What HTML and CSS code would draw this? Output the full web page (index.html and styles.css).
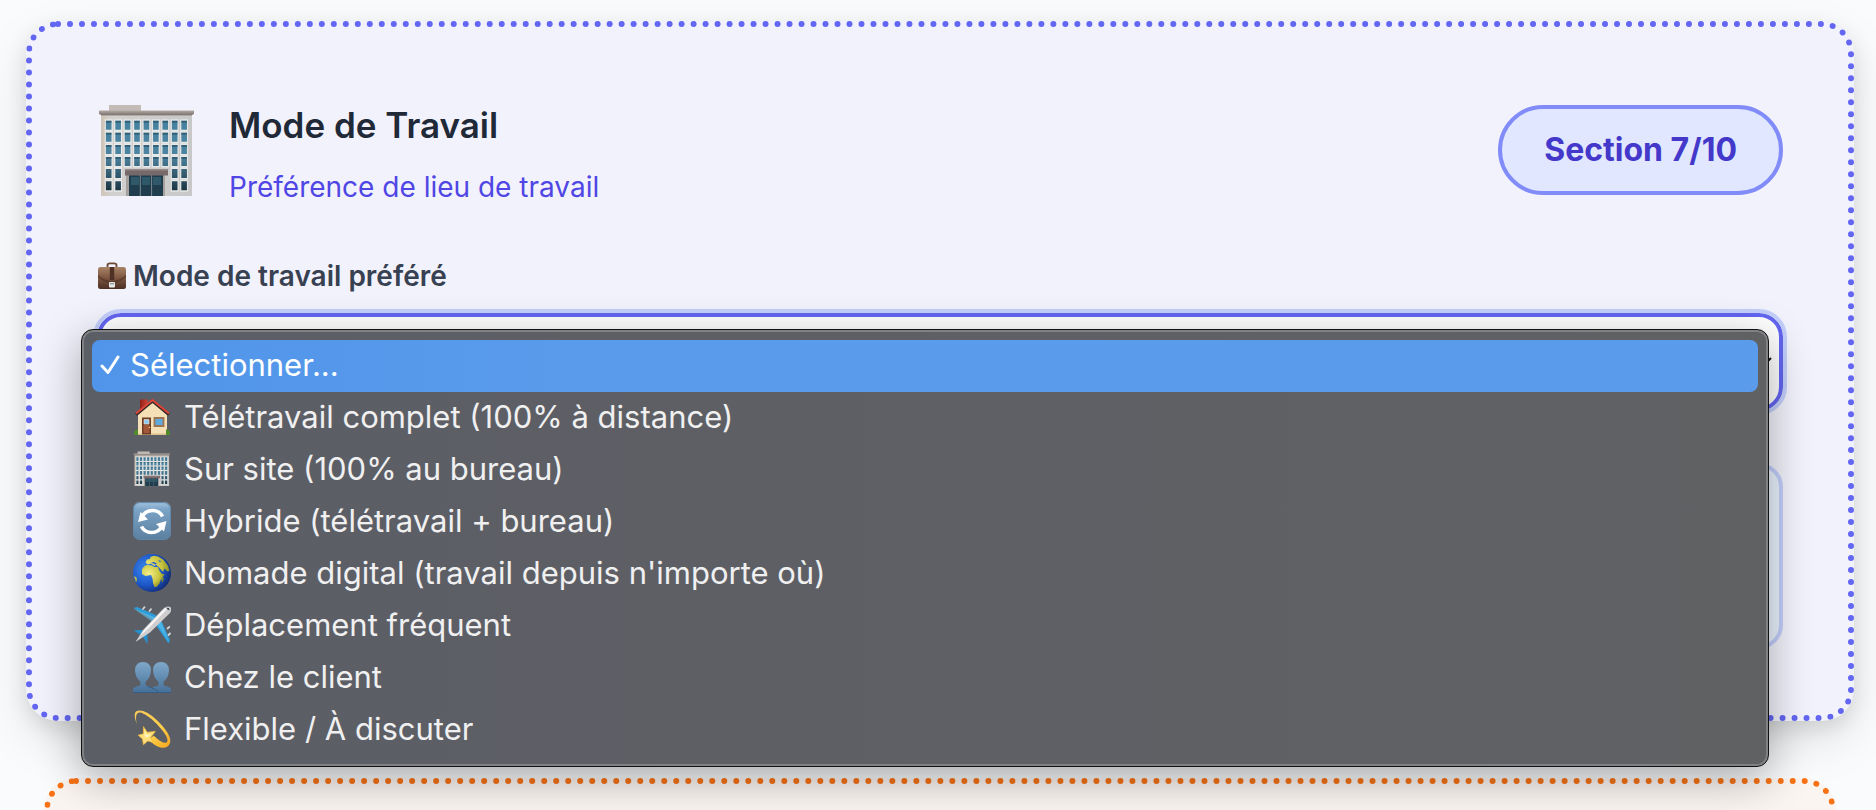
FILE: index.html
```html
<!DOCTYPE html>
<html lang="fr">
<head>
<meta charset="utf-8">
<meta name="viewport" content="width=device-width, initial-scale=1">
<title>Mode de Travail</title>
<link rel="stylesheet" href="styles.css">
</head>
<body>
<svg class="sprite" aria-hidden="true">
  <defs>
    <linearGradient id="wall" x1="0" y1="0" x2="1" y2="0"><stop offset="0" stop-color="#cfc5b8"/><stop offset=".12" stop-color="#d3d1cf"/><stop offset="1" stop-color="#c8c8c8"/></linearGradient>
    <linearGradient id="roof" x1="0" y1="0" x2="0" y2="1"><stop offset="0" stop-color="#b3aaa4"/><stop offset="1" stop-color="#7d7471"/></linearGradient>
    <linearGradient id="glass" x1="0" y1="15" x2="0" y2="86" gradientUnits="userSpaceOnUse"><stop offset="0" stop-color="#4682a0"/><stop offset=".5" stop-color="#4c84a0"/><stop offset=".75" stop-color="#355d72"/><stop offset="1" stop-color="#1b3540"/></linearGradient>
    <linearGradient id="sync" x1="0" y1="0" x2="0" y2="1"><stop offset="0" stop-color="#a3c3df"/><stop offset=".2" stop-color="#7ba3c6"/><stop offset="1" stop-color="#5b7f9f"/></linearGradient>
    <radialGradient id="sea" cx=".35" cy=".4" r=".7"><stop offset="0" stop-color="#3d8df0"/><stop offset=".6" stop-color="#1d56c8"/><stop offset="1" stop-color="#10286c"/></radialGradient>
    <radialGradient id="land" cx=".3" cy=".4" r=".8"><stop offset="0" stop-color="#f6f08a"/><stop offset=".6" stop-color="#c9c53f"/><stop offset="1" stop-color="#6f7a1e"/></radialGradient>
    <linearGradient id="people" x1="0" y1="0" x2="0" y2="1"><stop offset="0" stop-color="#7fa8ca"/><stop offset="1" stop-color="#456f98"/></linearGradient>
    <linearGradient id="gold" x1="0" y1="0" x2="1" y2="1"><stop offset="0" stop-color="#f6c95a"/><stop offset=".6" stop-color="#ffcf4a"/><stop offset="1" stop-color="#f3a51c"/></linearGradient>
    <linearGradient id="leather" x1="0" y1="0" x2="0" y2="1"><stop offset="0" stop-color="#a98467"/><stop offset=".5" stop-color="#7d5540"/><stop offset="1" stop-color="#4c2f24"/></linearGradient>
    <linearGradient id="brick" x1="0" y1="0" x2="1" y2="0"><stop offset="0" stop-color="#8d2018"/><stop offset="1" stop-color="#cf4034"/></linearGradient>
  </defs>
  <symbol id="i-building" viewBox="0 0 100 92">
    <path fill="#c3bcb6" d="M12 0h32v7H12z"/>
    <path fill="url(#wall)" d="M4 8h91v83H4z"/>
    <path fill="#8f8782" opacity=".5" d="M4 9h91v2H4z"/>
    <path fill="url(#roof)" d="M2 5.5h95v3.5l-2 1H4l-2-1z"/>
    <path fill="none" stroke="#f3f6f6" stroke-width="12" stroke-dasharray="8 1.43" d="M7.7 20.2H92M7.7 32.3H92M7.7 44.4H92M7.7 56.5H92M7.7 68.6H25M7.7 80.7H25M73.7 68.6H92M73.7 80.7H92" opacity=".65"/>
    <path fill="none" stroke="url(#glass)" stroke-width="9" stroke-dasharray="5.6 3.83" d="M8.9 20.2H92M8.9 32.3H92M8.9 44.4H92M8.9 56.5H92M8.9 68.6H24M8.9 80.7H24M74.9 68.6H92M74.9 80.7H92"/>
    <path fill="none" stroke="#23495c" stroke-width="2" stroke-dasharray="5.6 3.83" d="M8.9 16.7H92M8.9 28.8H92M8.9 40.9H92M8.9 53H92" opacity=".6"/>
    <path fill="#a7a19d" d="M29 70h39v21H29z"/>
    <path fill="#1f3d4c" d="M32 70h34v21H32z"/>
    <path fill="#3b6a80" d="M34 72h8v8h-8zM45 72h8v8h-8zM56 72h8v8h-8z" opacity=".6"/>
    <path stroke="#7d8c92" stroke-width="1" d="M43.3 70v21M54.6 70v21"/>
    <path fill="#77696a" d="M28 64h43v6.5H28z"/>
    <path fill="#958a88" d="M28 64h43v1.5H28z"/>
  </symbol>
  <symbol id="i-briefcase" viewBox="0 0 30 28">
    <path fill="none" stroke="#6b4634" stroke-width="1.8" d="M10.5 5V3.2Q10.5 1.4 13 1.4h4q2.5 0 2.5 1.800V5"/>
    <rect x="1" y="5" width="28" height="22" rx="2.5" fill="url(#leather)"/>
    <path fill="#4d2f25" opacity=".65" d="M1 13q7 6 14 6t14-6v2q-7 6-14 6T1 15z"/>
    <path fill="#4f3024" d="M12.8 5h4.4v13h-4.4z"/>
    <rect x="12" y="20" width="6" height="5.5" rx="1" fill="#e8e9ea"/>
    <path fill="#9b9b9b" d="M13 21h4v1.5h-4z"/>
  </symbol>
  <symbol id="i-house" viewBox="0 0 38 38">
    <path fill="url(#brick)" d="M7 1.5h7.5V10L7 16z"/>
    <path fill="#f4dfb6" d="M5 17 19.5 4 34 17v20H5z"/>
    <path fill="#dcc08e" d="M5 35.5h29V37H5z"/>
    <path fill="none" stroke="#3a2a26" stroke-width="3" stroke-linejoin="round" d="M3 16.500 19.500 3 36 16.500"/>
    <path fill="none" stroke="#e0453a" stroke-width="2" stroke-linejoin="round" d="M3 15.500 19.500 2 36 15.500"/>
    <path fill="#6d3a24" d="M9 19.500h9V36.500H9z"/>
    <path fill="#a3583a" d="M10.5 27h6v8h-6z"/>
    <path fill="#8ccbf2" stroke="#e9ddcf" stroke-width=".7" d="M11 21.500h5v4.500h-5z"/>
    <path fill="#5ea9dd" stroke="#9c7454" stroke-width="1.8" d="M21.5 20h9v8h-9z"/>
    <circle cx="16.5" cy="29.5" r=".8" fill="#f4d04a"/>
    <path fill="#4f8b2a" d="M1 37v-3q1-3 4-2.500V37zM37 37v-3q-1-3-4-2.500V37z"/>
  </symbol>
  <symbol id="i-sync" viewBox="0 0 38 38">
    <rect width="38" height="38" rx="7" fill="url(#sync)"/>
    <rect x=".6" y=".6" width="36.8" height="36.8" rx="6.5" fill="none" stroke="#5f86a9"/>
    <path fill="none" stroke="#fff" stroke-width="3.6" d="M8.5 15.500C11 10.500 15 8.500 19.500 8.500S27.500 10.500 29.500 14.500M29.500 23.500C27 28.500 23 30.500 18.500 30.500S10.500 28.500 8.500 24.500"/>
    <path fill="#fff" d="M5 20 7.500 10l7.500 7.500zM33.500 19 31 29.500 23 22z"/>
  </symbol>
  <symbol id="i-globe" viewBox="0 0 38 38">
    <circle cx="19" cy="19" r="19" fill="url(#sea)"/>
    <path fill="url(#land)" d="M9 15.500q2-4 5-4.500l5 .5 2 1.500h4l1.500 4 2.500 3h2.500l-2 4-2 2.500-1 3-3 3.500h-2l-1.500-4-.5-4.500-1.500-3.500-5.500 1-3.500-2z"/>
    <path fill="url(#land)" d="M12.500 8.500 14 5.500l3-.5.5-2L21 1.800l4 .7 5.500 3.300 4.500 6 1.500 5-2 .7-3-3-1.500 3.500-3.500-4-1.500-1.500-2-2-1.500 1.500L18 9.500l-3 1zM1 22l2.500 1.500.5 3-1 2zM29.500 23.500l1.500 1-1.500 4-1-1z"/>
    <path fill="#2a62c9" d="m18 8.500 3-.5 3 1.500-1.500 1zM25 6l3 1-1 1.500z"/>
  </symbol>
  <symbol id="i-plane" viewBox="0 0 38 38">
    <path fill="#2c9bd8" d="M.5 2 4 1l19 8 2 7zM37 34l-1.500 3.500L22 18l6-4z"/>
    <path fill="#64c5ee" d="m.5 2.500 18.500 13 3-4zM36 36l-12-18 4-3z" opacity=".6"/>
    <path fill="#2590cf" d="M.5 24.500 8 24l6 1.500-5 4zM14.500 38 10 31l4.500-5.500z"/>
    <path fill="#cfcdcd" d="M2.500 36 10 24 28.500 4.500Q33-.5 36.500.7T37 7L17 26.500z"/>
    <path fill="#f6f4f4" d="M7 30 11 24 29.500 4.500Q33 .5 35.500 1.500L16 22z"/>
    <path fill="#3b4a55" d="m33 1.500 3 .5.5 2.500-2-1z"/>
    <path stroke="#d2d2d4" stroke-width="1.8" stroke-linecap="round" d="m10 3 1.500-1.800M16.500 5 18 3.200M34.500 22.500l1.800-1.500M35.500 29l1.500-1.500"/>
  </symbol>
  <symbol id="i-people" viewBox="0 0 38 38">
    <path fill="url(#people)" d="M0 35v-4q1-2 6-3 2-1 1.500-4Q2 19 2 12 2.500 4 10 4t8 8q0 7-5.500 12-.5 3 1.500 4 5 1 6 3v4z"/>
    <path fill="url(#people)" d="M18 35v-4q1-2 6-3 2-1 1.500-4Q20 19 20 12q.5-8 8-8t8 8q0 7-5.500 12-.5 3 1.500 4 5 1 6 3v4z"/>
    <path fill="none" stroke="#355d84" d="M14.500 28.500q4 1 6 2.500l2 .5q2 1 2.500 2.500M0 34.500h38"/>
  </symbol>
  <symbol id="i-dizzy" viewBox="0 0 38 40">
    <path fill="url(#gold)" d="M3 15Q-2 2 4 .7 12-.5 24 10.500 40 26 38 34.500 36 41 28 39.500 22 38 15 31l6-4q8 8 13 7.500 4-3-4-13Q18 7 8 3 0 1 3 15z"/>
    <path fill="#ffe07a" stroke="#f6b93a" stroke-width=".8" stroke-linejoin="round" d="m10 17.500 4 6 8.500-1-5 6.500 2.500 5-5.500-1.500-4.500 4L9 30.500l-4.500-4 5.500-1.500z"/>
    <path fill="#fff6c4" d="m11 21 2 5 5-.5-4 3.500-2.500-1z"/>
  </symbol>
</svg>

<main class="page">
  <section class="card card-work">
    <header class="card-head">
      <svg class="hero-icon" aria-hidden="true"><use href="#i-building"/></svg>
      <div class="heading">
        <h2 class="title">Mode de Travail</h2>
        <p class="subtitle">Préférence de lieu de travail</p>
      </div>
      <span class="badge">Section 7/10</span>
    </header>

    <label class="field-label" for="mode">
      <svg class="label-icon" aria-hidden="true"><use href="#i-briefcase"/></svg>
      Mode de travail préféré
    </label>
    <div class="field">
      <select class="select" id="mode">
        <option>Sélectionner...</option>
      </select>
      <svg class="chevron" viewBox="0 0 16 10" aria-hidden="true"><path d="m1 1 7 7 7-7"/></svg>
      <ul class="menu" role="listbox" aria-label="Mode de travail préféré">
        <li class="item item-active" role="option" aria-selected="true"><svg class="check" viewBox="0 0 20 20" aria-hidden="true"><path d="m2 11 6 6.500L18 2"/></svg>Sélectionner...</li>
        <li class="item" role="option"><svg class="icon" aria-hidden="true"><use href="#i-house"/></svg>Télétravail complet (100% à distance)</li>
        <li class="item" role="option"><svg class="icon" aria-hidden="true"><use href="#i-building"/></svg>Sur site (100% au bureau)</li>
        <li class="item" role="option"><svg class="icon" aria-hidden="true"><use href="#i-sync"/></svg>Hybride (télétravail + bureau)</li>
        <li class="item" role="option"><svg class="icon" aria-hidden="true"><use href="#i-globe"/></svg>Nomade digital (travail depuis n'importe où)</li>
        <li class="item" role="option"><svg class="icon" aria-hidden="true"><use href="#i-plane"/></svg>Déplacement fréquent</li>
        <li class="item" role="option"><svg class="icon" aria-hidden="true"><use href="#i-people"/></svg>Chez le client</li>
        <li class="item" role="option"><svg class="icon" aria-hidden="true"><use href="#i-dizzy"/></svg>Flexible / À discuter</li>
      </ul>
    </div>
    <div class="note"></div>
  </section>
  <section class="card card-next"></section>
</main>
</body>
</html>
```

FILE: styles.css
```css
* { box-sizing: border-box; }

body {
  margin: 0;
  background: #f9fbfc;
  font-family: Inter, "Liberation Sans", sans-serif;
}

.sprite { position: absolute; width: 0; height: 0; }

.page {
  height: 100vh;
  overflow: hidden;
  padding: 21px 22px 0 26px;
}

.card {
  border: 6px dotted;
  border-radius: 32px;
}

.card-work {
  padding: 78px 65px 66px;
  border-color: #6366f1;
  background: #f2f2fc;
  box-shadow: 0 20px 50px rgba(0, 0, 0, .1), 0 8px 20px rgba(0, 0, 0, .1);
}

.card-next {
  min-height: 240px;
  margin: 57px 18px 0;
  border-color: #f97316;
  background: #fbf5f2;
}

.card-head {
  display: flex;
  align-items: flex-start;
  gap: 32px;
}

.hero-icon { width: 100px; height: 92px; flex: none; }

.heading { flex: 1; }

.title {
  margin: 0;
  color: #1f2937;
  font-size: 35px;
  line-height: 40px;
  font-weight: 600;
}

.subtitle {
  margin: 22px 0 0;
  color: #4f46e5;
  font-size: 28px;
  line-height: 40px;
}

.badge {
  padding: 21px 42px;
  border: 4px solid #818cf8;
  border-radius: 45px;
  background: #e0e7ff;
  color: #4338ca;
  font-size: 32px;
  line-height: 40px;
  font-weight: 700;
}

.field-label {
  display: flex;
  align-items: center;
  gap: 6px;
  margin-top: 49px;
  color: #374151;
  font-size: 28px;
  line-height: 40px;
  font-weight: 600;
}

.label-icon { width: 30px; height: 28px; }

.field {
  position: relative;
  margin-top: 17px;
}

.select {
  display: block;
  width: 100%;
  height: 98px;
  padding: 0 32px;
  border: 4px solid #6366f1;
  border-radius: 24px;
  outline: 4px solid #c3cffb;
  appearance: none;
  background: #fff;
  color: #1f2937;
  font: inherit;
  font-size: 32px;
}

.chevron {
  position: absolute;
  right: 11px;
  top: 44px;
  width: 16px;
  height: 10px;
  fill: none;
  stroke: #111;
  stroke-width: 2;
}

.menu {
  position: absolute;
  top: 16px;
  left: -16px;
  right: 14px;
  margin: 0;
  padding: 10px;
  list-style: none;
  border: 1px solid #111;
  border-radius: 12px;
  background: linear-gradient(90deg, #5c5e66, #606163);
  box-shadow: inset 0 0 0 2px #808184, 0 12px 44px rgba(0, 0, 0, .32);
}

.item {
  display: flex;
  align-items: center;
  gap: 13px;
  height: 52px;
  padding: 0 41px 3px;
  border-radius: 8px;
  color: #f0f0f1;
  font-size: 31px;
  line-height: 48px;
}

.item-active {
  gap: 10px;
  padding-left: 8px;
  background: linear-gradient(90deg, #5095ea, #5a9beb 30%);
  color: #fff;
}

.check {
  width: 20px;
  height: 20px;
  fill: none;
  stroke: #fff;
  stroke-width: 3;
  stroke-linecap: round;
  stroke-linejoin: round;
}

.icon { width: 38px; height: 38px; flex: none; }

.note {
  height: 186px;
  margin-top: 52px;
  border: 4px solid #c3cffb;
  border-radius: 24px;
  background: #eaf3fd;
}
```
